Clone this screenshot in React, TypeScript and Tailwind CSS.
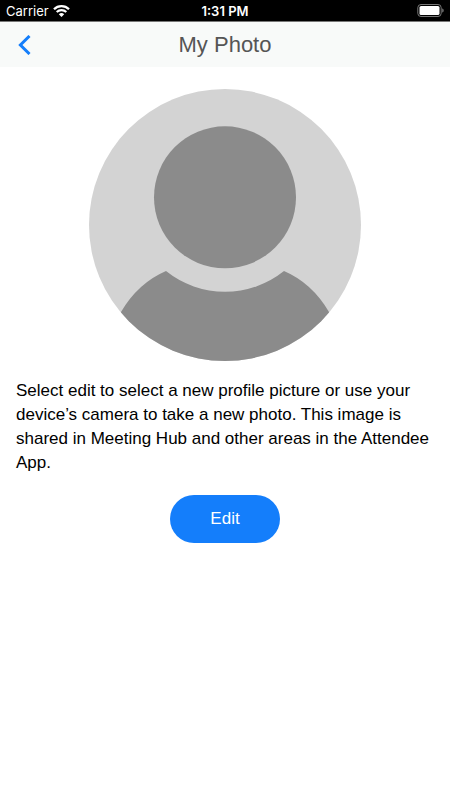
import * as React from "react";

const StatusBar = () => (
  <div className="grid h-[22px] grid-cols-3 items-center border-b border-[#777777] bg-black px-1.5 text-[13px] leading-4 text-white">
    <div className="flex items-center gap-1 font-[Inter]">
      <span>Carrier</span>
      <svg viewBox="0 0 17 12" className="h-3 w-[17px]" fill="none" stroke="currentColor">
        <path d="M1 4.300a10.600 10.600 0 0 1 15 0" strokeWidth="2.3" />
        <path d="M3.700 7.100a6.800 6.800 0 0 1 9.600 0" strokeWidth="2.1" />
        <path d="M8.500 12 5.800 9.300a3.800 3.800 0 0 1 5.400 0z" fill="currentColor" stroke="none" />
      </svg>
    </div>
    <span className="text-center font-[Inter] font-semibold">1:31 PM</span>
    <svg viewBox="0 0 27 13" className="h-[13px] w-[27px] justify-self-end" fill="none">
      <rect x="0.8" y="0.5" width="23.400" height="12" rx="3.2" stroke="#777777" />
      <rect x="2.500" y="2" width="20" height="9" rx="1.6" fill="white" />
      <path d="M25.200 4.500v4c1-.4 1.500-1.100 1.500-2s-.5-1.600-1.500-2z" fill="#777777" />
    </svg>
  </div>
);

const Header = () => (
  <header className="grid h-[45px] grid-cols-[48px_1fr_48px] items-center bg-[#f8faf9]">
    <button type="button" aria-label="Back" className="flex h-full items-center pl-[18px] text-[#147efb]">
      <svg viewBox="0 0 13 20" className="h-5 w-[13px]" fill="none" stroke="currentColor" strokeWidth="3">
        <path d="M11.500 1 2.400 10l9.100 9" />
      </svg>
    </button>
    <h1 className="text-center text-[22px] leading-7 text-[#555555]">My Photo</h1>
  </header>
);

const Avatar = () => (
  <svg viewBox="0 0 272 272" className="size-[272px] rounded-full bg-[#d3d3d3]" role="img" aria-label="Profile photo">
    <g fill="#8b8b8b">
      <circle cx="136" cy="108.300" r="71" />
      <path d="M77 182a94.400 94.400 0 0 0 118 0Q223 194 240 223L260 272H12L32 223Q49 194 77 182z" />
    </g>
  </svg>
);

const App = () => {
  return (
    <div className="min-h-screen bg-white font-['Liberation_Sans',sans-serif]">
      <StatusBar />
      <Header />
      <main className="flex flex-col items-center px-4 pt-[22px]">
        <Avatar />
        <p className="mt-[18px] w-full text-[17px] leading-6 text-black">
          Select edit to select a new profile picture or use your device’s camera to take a new photo.
          This image is shared in Meeting Hub and other areas in the Attendee App.
        </p>
        <button type="button" className="mt-5 h-12 rounded-full bg-[#147efb] px-10 text-[17px] leading-6 text-white">
          Edit
        </button>
      </main>
    </div>
  );
};
export default App;
